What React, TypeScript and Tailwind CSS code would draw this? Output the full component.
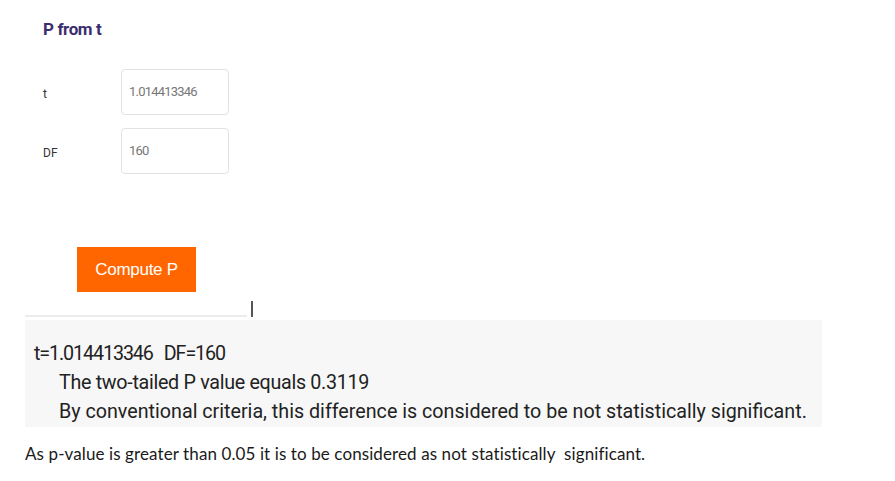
import React from 'react';

const barlow = { fontFamily: 'Roboto, "Noto Sans", sans-serif' };

function Field({ label, value }: { label: string; value: string }) {
  return (
    <div className="flex items-center h-[46px]">
      <span className="w-[78px] text-[12px] text-[#333] pt-[3px]">{label}</span>
      <div className="w-[108px] h-[46px] border border-[#e2e2e2] rounded-[4px] flex items-center pl-[7px] text-[13px] text-[#777] tracking-[-0.8px]">
        {value}
      </div>
    </div>
  );
}

export default function App() {
  return (
    <div className="w-[895px] h-[481px] bg-white relative overflow-hidden" style={barlow}>
      <div className="pl-[43px] pt-[18px]">
        <h2 className="text-[17px] font-bold text-[#3b2d6e] leading-[22px] tracking-[-0.4px]">P from t</h2>
        <div className="mt-[29px] flex flex-col gap-[13px]">
          <Field label="t" value="1.014413346" />
          <Field label="DF" value="160" />
        </div>
      </div>

      <div className="pl-[77px] mt-[73px]">
        <button
          className="w-[119px] h-[45px] bg-[#ff6600] text-white text-[17px] tracking-[-0.3px]"
          style={{ fontFamily: '"Liberation Sans", Arial, sans-serif' }}
        >
          Compute P
        </button>
      </div>

      <div className="flex items-end ml-[25px] mt-[8px] h-[17px]">
        <div className="w-[222px] h-[2px] bg-[#ececec]" />
        <div className="ml-[4px] w-[2px] h-[16px] bg-[#555]" />
      </div>

      <div className="ml-[25px] mt-[3px] w-[797px] h-[107px] bg-[#f7f7f7] pt-[19px] text-[19.7px] text-[#222] leading-[29px] whitespace-nowrap">
        <div className="pl-[9px] tracking-[-1.1px] flex">
          <span>t=1.014413346</span>
          <span className="ml-[11px]">DF=160</span>
        </div>
        <div className="pl-[34px] tracking-[-0.3px]">The two-tailed P value equals 0.3119</div>
        <div className="pl-[34px]">By conventional criteria, this difference is considered to be not statistically significant.</div>
      </div>

      <p
        className="ml-[25px] mt-[14px] text-[17px] text-[#1a1a1a] tracking-[0.1px]"
        style={{ fontFamily: 'Lato, "Open Sans", sans-serif' }}
      >
        As p-value is greater than 0.05 it is to be considered as not statistically&nbsp; significant.
      </p>
    </div>
  );
}
